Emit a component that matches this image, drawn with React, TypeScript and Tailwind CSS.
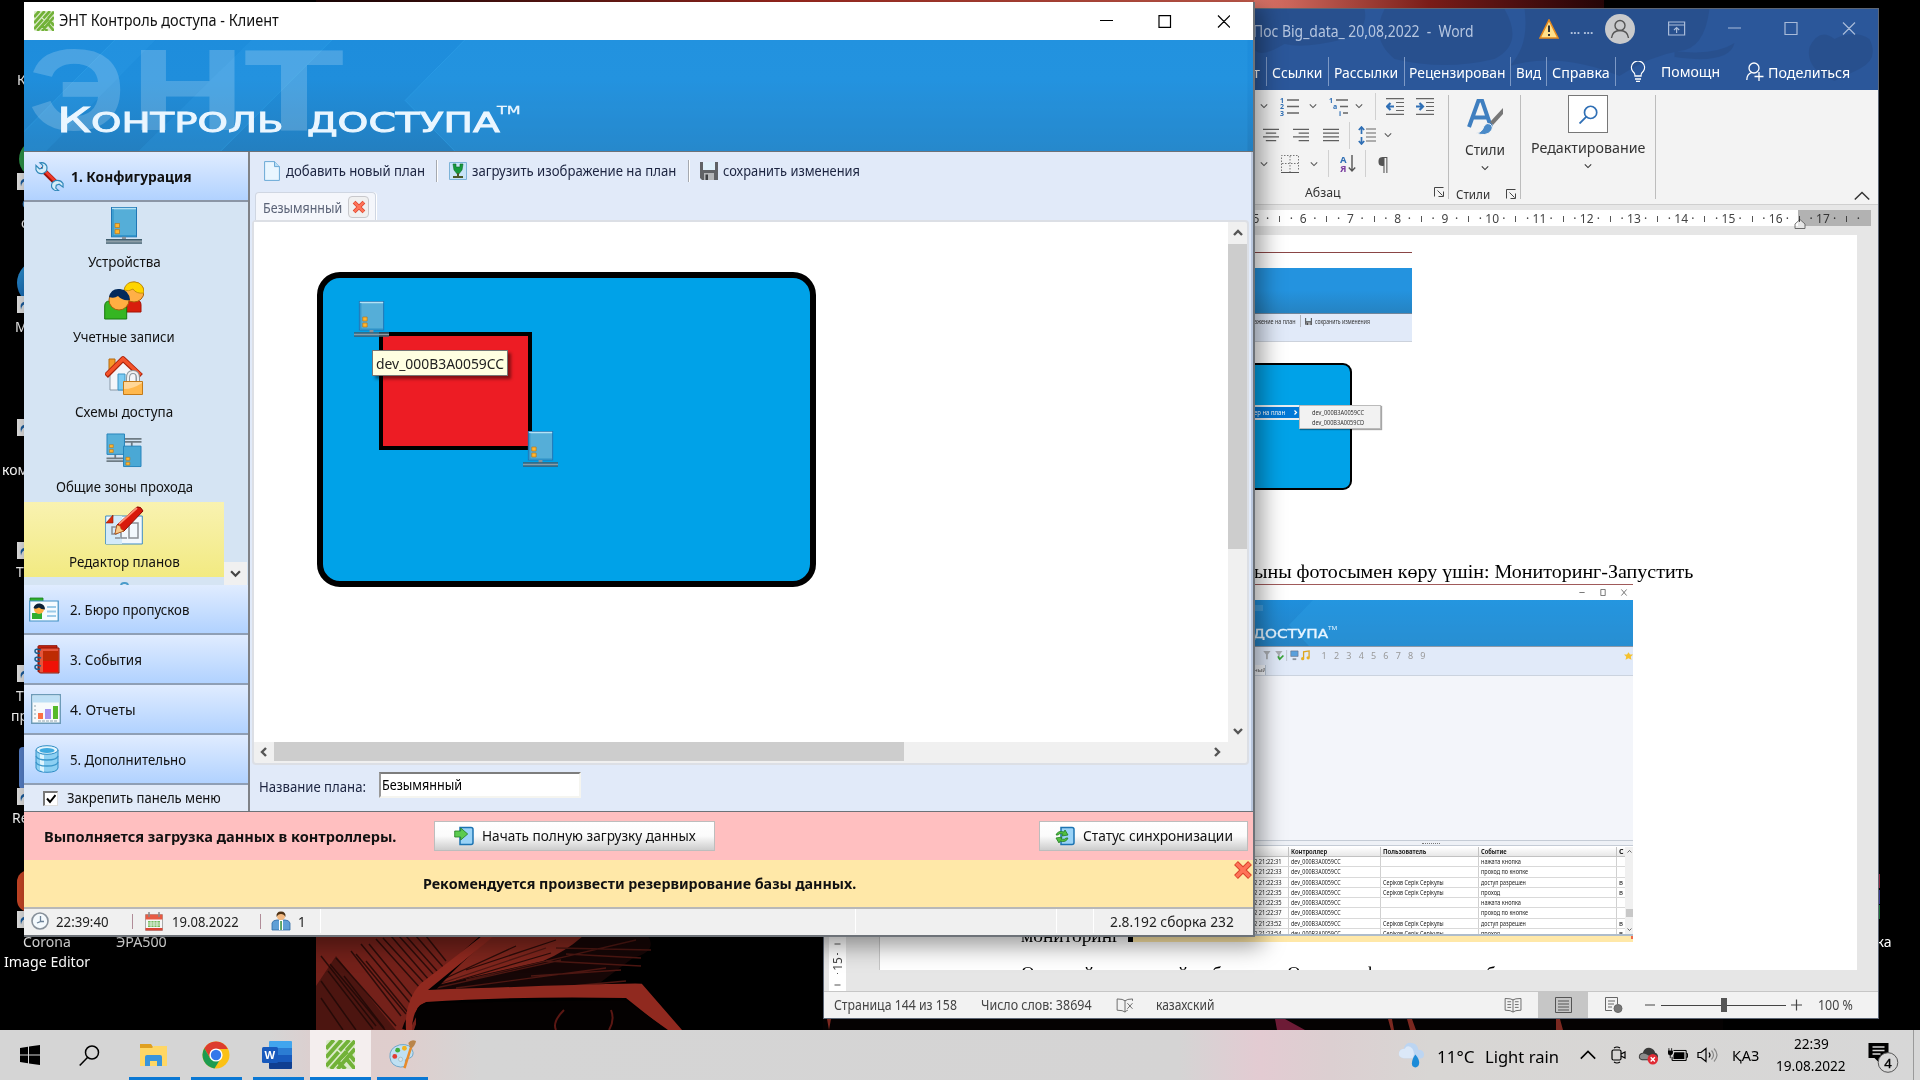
import React, { useLayoutEffect, useRef, useState } from "react";

/* Single-line label squeezed or stretched to an exact advance width. */
function Fit({ w, className = "", children }: { w: number; className?: string; children: React.ReactNode }) {
  const ref = useRef<HTMLSpanElement>(null);
  const [scale, setScale] = useState(1);
  useLayoutEffect(() => {
    const el = ref.current;
    if (el && el.offsetWidth) setScale(w / el.offsetWidth);
  }, [w]);
  return (
    <span className={"inline-block shrink-0 whitespace-pre " + className} style={{ width: w }}>
      <span ref={ref} className="inline-block origin-left" style={{ transform: `scaleX(${scale})` }}>
        {children}
      </span>
    </span>
  );
}

const UI = "font-['Noto_Sans','Open_Sans',sans-serif]";
const SERIF = "font-['Liberation_Serif',serif]";

function GreenLogo({ className = "" }: { className?: string }) {
  return (
    <svg viewBox="0 0 30 30" className={className} preserveAspectRatio="none">
      <rect width="30" height="30" rx="2" fill="#dcebcb" />
      <g stroke="#72b238" strokeWidth="4" fill="none">
        <path d="M0 9 8 0M0 18 16 0M0 27 13 12.500M14 11 24 0M5 30 21 12M12 30 30 9M21 11 30 1M13 21 22 12M20 18l10 12M12 22l8 8M25 16l5 6" />
      </g>
    </svg>
  );
}

function Device({ className = "" }: { className?: string }) {
  return (
    <svg viewBox="0 0 36 36" className={className} preserveAspectRatio="none">
      <rect x="5.500" y=".5" width="25" height="28.500" fill="#55aed8" stroke="#1f76b5" />
      <path d="M6 1.500h24" stroke="#b4e2f5" strokeWidth="1.500" />
      <path d="M7 2v26h23" stroke="#2990c8" fill="none" />
      <path d="M9 16h4.500v4H9zM9 22h4.500v4H9z" fill="#ffb52e" stroke="#b87616" strokeWidth=".7" />
      <path d="M16 29h4v3h-4z" fill="#8b9299" />
      <path d="M0 32h36M0 35h36" stroke="#3f5c6c" strokeWidth="1.500" />
      <path d="M0 33.500h36" stroke="#8c9da6" strokeWidth="1.500" />
    </svg>
  );
}

function Users() {
  return (
    <svg viewBox="0 0 40 39" className="h-[39px] w-[40px]">
      <path d="M21 31v-7q0-5 6-5h5q5 0 5 5v7z" fill="#d81e0c" stroke="#a51205" />
      <circle cx="30" cy="11" r="10" fill="#ffb047" stroke="#a8620c" />
      <path d="M20 9Q22 0 31 1q9 1 9 11-8 1-11-4-4 3-9 1z" fill="#ffd500" stroke="#b8860b" strokeWidth=".8" />
      <path d="M.7 38V25q0-5 5-5h12q5 0 5 5v13z" fill="#35b522" stroke="#19780e" />
      <circle cx="15" cy="19" r="10" fill="#ffae42" stroke="#a8620c" />
      <path d="M5 16Q7 7 16 8q9 1 10 11-8 1-12-4-4 3-9 1z" fill="#032a5c" />
    </svg>
  );
}

function House() {
  return (
    <svg viewBox="0 0 38 39" className="h-[39px] w-[38px]">
      <path d="M4 3h6v12H4z" fill="#f59a28" stroke="#b36a10" />
      <path d="M5 18 18 5l13 13v16H5z" fill="#f3f6fa" stroke="#8998a6" />
      <path d="M13 18h7v16h-7z" fill="#7ccbf2" stroke="#3a94c4" />
      <path d="M1 20 18 3l18 17" stroke="#a9230b" strokeWidth="5.500" fill="none" strokeLinejoin="round" />
      <path d="M1.500 19 18 3l17.500 16" stroke="#f4532a" strokeWidth="3.500" fill="none" />
      <path d="M23 26v-4q0-6 5-6t5 6v4" stroke="#8e979d" strokeWidth="4" fill="none" />
      <path d="M23 26v-4q0-6 5-6t5 6v4" stroke="#eef1f3" strokeWidth="2" fill="none" />
      <path d="M18.500 25.500h19v13h-19z" fill="#ffb84d" stroke="#c47a17" />
      <path d="M19 33q9 0 18-6v-1H19z" fill="#ffd798" />
    </svg>
  );
}

function Zones() {
  return (
    <svg viewBox="0 0 36 36" className="h-[35px] w-[36px]">
      <path d="M18 6h18M18 9h18M26 9v5M0 26h18M0 29h18M9 22v5" stroke="#6e7b84" strokeWidth="1.800" />
      <path d="M.5 1h18v21H.5z" fill="#58b0d9" stroke="#2583bb" />
      <path d="M17.500 13.500h18v21h-18z" fill="#4aa8d5" stroke="#2583bb" />
      <path d="M3 12h4v3H3zM3 17h4v3H3zM20 25h4v3h-4zM20 30h4v3h-4z" fill="#ffb52e" stroke="#b87616" strokeWidth=".6" />
    </svg>
  );
}

function PlanEdit() {
  return (
    <svg viewBox="0 0 39 39" className="h-[39px] w-[39px]">
      <path d="M.7 10h36.600v28H.7z" fill="#f2f8fd" stroke="#3c8bc4" />
      <path d="M1 38V18l8-8h8v28z" fill="#d3eafa" />
      <path d="M1 17 8 9v8z" fill="#d92b0b" stroke="#8e1a04" strokeWidth=".6" />
      <path d="M12 21H7v7h5M15 32h-5M16 27v5h6M24 17v15h9V17z" stroke="#8a8f95" fill="none" strokeWidth="1.500" />
      <path d="m10 28 2-9L32 1q4-1 6 4L19 25z" fill="#d8190b" stroke="#8a0c04" />
      <path d="m14 18 18-16" stroke="#ff8c70" strokeWidth="1.800" />
      <path d="m10 28 2-9 3 1 1 3 3 2z" fill="#f7c98a" stroke="#a8620c" strokeWidth=".5" />
    </svg>
  );
}

function Wrench() {
  return (
    <svg viewBox="0 0 30 30" className="h-[29px] w-[29px]">
      <path d="m6 6 17 17" stroke="#9c1108" strokeWidth="5.500" />
      <path d="m8 7 14 14" stroke="#ef3a2b" strokeWidth="3" />
      <path d="M1 3.500 4.500 7l3-.5L8 3.500 5 .8q5-1 7 3 1 3-.5 6l-3 2Q3 13 1 8zM29 26l-4-3-3 1-.5 3 3 2.700q-5 .5-7-3-1-3 .5-5.500l3-2q5.500-1.200 8 3z" fill="#d4edf9" stroke="#2e86b8" strokeWidth="1.200" />
    </svg>
  );
}

function Card() {
  return (
    <svg viewBox="0 0 30 25" className="h-[25px] w-[30px]">
      <path d="M1 1h13v4H1z" fill="#2fae30" stroke="#1b7d1c" strokeWidth=".8" />
      <path d="M.7 4h28.500v20H.7z" fill="#f5fbff" stroke="#4392c6" strokeWidth="1.200" />
      <path d="M18 10h9M18 14.500h9M18 19h9" stroke="#9bcbe8" strokeWidth="2" />
      <path d="M3 22v-6h10v6z" fill="#2fae30" />
      <circle cx="10" cy="12" r="5" fill="#ffae42" />
      <path d="M4.500 11Q6 6 11 6.500q5 1 5 6-4 0-6-2-3 2-5.500.5z" fill="#0c2238" />
    </svg>
  );
}

function Book() {
  return (
    <svg viewBox="0 0 26 29" className="h-[29px] w-[26px]">
      <path d="M4 1.500Q4 .7 5 .7h18v26H4z" fill="#c8250f" stroke="#8d1206" />
      <path d="M7 3h18v25H7q-2 0-2-1V4z" fill="#e5553b" stroke="#8d1206" />
      <path d="M9 6h15v21H9z" fill="#ef1106" />
      <path d="M9 6h15v10H9z" fill="#bd2b04" />
      <path d="M7 5Q1 3 1 6t5 2M7 13q-6-2-6 1t5 2M7 21q-6-2-6 1t5 2" fill="none" stroke="#1d5f8e" strokeWidth="1.600" />
    </svg>
  );
}

function Report() {
  return (
    <svg viewBox="0 0 30 30" className="h-[30px] w-[30px]">
      <path d="M.7.700h28.600v28.600H.7z" fill="#f7fafb" stroke="#6d9bb8" strokeWidth="1.400" />
      <path d="M1.500 1.500h27v7h-27z" fill="#bfe0f5" />
      <path d="M3 12h2M3 16h2M3 20h2M3 24h2M7 27h20" stroke="#8fa3ae" strokeDasharray="3 1" />
      <path d="M7 19h5v6H7z" fill="#fb6f46" />
      <path d="M14 15h6v10h-6z" fill="#a18ff0" />
      <path d="M22 12h5v13h-5z" fill="#55b92b" />
    </svg>
  );
}

function Database() {
  return (
    <svg viewBox="0 0 24 28" className="h-[28px] w-[24px]">
      <path d="M1 5v18q1 4.300 11 4.300T23 23V5z" fill="#8dd0f3" stroke="#2f8dc4" />
      <path d="M5 9v16l4 2V10z" fill="#dff4fd" />
      <ellipse cx="12" cy="5" rx="11" ry="4.300" fill="#e3f5fd" stroke="#2f8dc4" />
      <ellipse cx="12" cy="5.500" rx="7.500" ry="2.600" fill="#3ea9df" />
      <path d="M1 11q1 4 11 4t11-4M1 17q1 4 11 4t11-4" fill="none" stroke="#3b97cb" strokeWidth="1.300" />
    </svg>
  );
}

function RedCross({ className = "" }: { className?: string }) {
  return (
    <svg viewBox="0 0 20 20" className={className}>
      <path d="M3 3l14 14M17 3 3 17" stroke="#d8412a" strokeWidth="5.500" />
      <path d="M3.500 3.500l13 13M16.500 3.500l-13 13" stroke="#ff7358" strokeWidth="3.600" />
    </svg>
  );
}

function LoadIcon({ sync = false }: { sync?: boolean }) {
  return (
    <svg viewBox="0 0 20 20" className="h-[20px] w-[20px]">
      <path d="M6 1.500h11q2 0 2 2v13q0 2-2 2H6z" fill="#9ad3f7" stroke="#1c74b3" strokeWidth="1.500" />
      {sync ? (
        <path d="M1 9Q3 4 9 6l1-2 3 5-6 1 1-2Q4 7 3 9zM13 12q-2 5-8 3l-1 2-3-5 6-1-1 2q4 1 5-1z" fill="#52c03f" stroke="#217c22" strokeWidth=".8" />
      ) : (
        <path d="M.7 5h6V2l7 6-7 6v-3h-6z" fill="#5bcb4e" stroke="#217c22" strokeWidth=".8" />
      )}
    </svg>
  );
}

function Chev({ dir = "down", className = "" }: { dir?: "down" | "up" | "left" | "right"; className?: string }) {
  const d = { down: "M1 3l4 4 4-4", up: "M1 7l4-4 4 4", left: "M7 1 3 5l4 4", right: "M3 1l4 4-4 4" }[dir];
  return (
    <svg viewBox="0 0 10 10" className={"shrink-0 " + className}>
      <path d={d} fill="none" stroke="currentColor" strokeWidth="var(--sw,1.3)" />
    </svg>
  );
}

function Floppy({ className = "" }: { className?: string }) {
  return (
    <svg viewBox="0 0 18 18" className={className} preserveAspectRatio="none">
      <path d="M0 0h18v18H2l-2-2z" fill="#606266" />
      <path d="M3 0h12v8H3z" fill="#dff0fb" />
      <path d="M4 11h10v7H4z" fill="#b3b5b8" />
      <path d="M5.500 12.500H8V18H5.500z" fill="#3c3e42" />
    </svg>
  );
}

const sideItems = [
  { label: "Устройства", w: 73, icon: <Device className="h-[37px] w-[36px]" />, sel: false },
  { label: "Учетные записи", w: 102, icon: <Users />, sel: false },
  { label: "Схемы доступа", w: 98, icon: <House />, sel: false },
  { label: "Общие зоны прохода", w: 137, icon: <Zones />, sel: false },
  { label: "Редактор планов", w: 111, icon: <PlanEdit />, sel: true },
];

const sections = [
  { label: "2. Бюро пропусков", w: 119, icon: <Card />, pad: "pl-[5px] pr-[11px]" },
  { label: "3. События", w: 72, icon: <Book />, pad: "pl-[10px] pr-[10px]" },
  { label: "4. Отчеты", w: 66, icon: <Report />, pad: "pl-[7px] pr-[9px]" },
  { label: "5. Дополнительно", w: 116, icon: <Database />, pad: "pl-[11px] pr-[11px]" },
];

function Sidebar() {
  return (
    <div className="flex w-[226px] flex-col border-r-2 border-[#7f8287] bg-[#d5e4f3]">
      <div className="flex h-[50px] shrink-0 items-center border-b-2 border-[#8b96a6] bg-gradient-to-b from-[#e0ecff] to-[#b1d2ff] pl-[11px]">
        <Wrench />
        <Fit w={121} className="ml-[7px] text-[14px] font-bold">1. Конфигурация</Fit>
      </div>
      <div className="flex h-[383px] shrink-0 overflow-hidden">
        <div className="w-[200px]">
          {sideItems.map((s) => (
            <div key={s.label} className={"flex h-[75px] flex-col items-center " + (s.sel ? "bg-gradient-to-b from-[#f9f2b0] to-[#f2ea81]" : "")}>
              <div className="mt-[2px] flex h-[42px] items-center">{s.icon}</div>
              <Fit w={s.w} className="mt-[6px] text-[14px] leading-[20px]">{s.label}</Fit>
            </div>
          ))}
          <div className="mx-auto mt-[5px] h-[8px] w-[9px] rounded-full border-2 border-[#4b9ccb]" />
        </div>
        <div className="mt-auto flex h-[23px] w-[23px] items-center justify-center bg-[#f0f0f0] text-[#444]">
          <Chev className="size-[11px] [--sw:2]" />
        </div>
      </div>
      {sections.map((s) => (
        <div key={s.label} className="flex h-[50px] shrink-0 items-center border-b-2 border-[#8f9fb5] bg-gradient-to-b from-[#e0ecff] to-[#b1d2ff]">
          <div className={"box-border w-[46px] shrink-0 " + s.pad}>
            <div className="w-[30px]">{s.icon}</div>
          </div>
          <Fit w={s.w} className="text-[14px]">{s.label}</Fit>
        </div>
      ))}
      <div className="flex flex-1 items-center bg-[#e1eaf8] pl-[19px]">
        <div className="flex size-[15px] items-center justify-center border border-t-2 border-l-2 border-[#ddd] border-t-[#777] border-l-[#777] bg-white">
          <svg viewBox="0 0 10 10" className="size-[10px]"><path d="M1 4.500 4 8l5.500-7" stroke="#000" strokeWidth="2" fill="none" /></svg>
        </div>
        <Fit w={154} className="ml-[9px] mt-[-2px] text-[14px]">Закрепить панель меню</Fit>
      </div>
    </div>
  );
}

function PlanCanvas() {
  return (
    <div className="relative flex-1 bg-white">
      <div className="absolute left-[63px] top-[50px] h-[315px] w-[499px] rounded-[23px] border-[6px] border-black bg-[#00a2e8]" />
      <div className="absolute left-[125px] top-[110px] h-[118px] w-[153px] border-4 border-black bg-[#ed1c24]" />
      <Device className="absolute left-[100px] top-[79px] h-[36px] w-[35px]" />
      <Device className="absolute left-[269px] top-[209px] h-[36px] w-[35px]" />
      <div className="absolute left-[118px] top-[128px] flex h-[26px] w-[136px] items-center border border-[#767676] bg-[#ffffe1] pl-[3px] text-[#222] shadow-[3px_3px_3px_rgba(0,0,0,0.45)]">
        <Fit w={128} className="text-[14px]">dev_000B3A0059CC</Fit>
      </div>
    </div>
  );
}

function ClientWindow() {
  return (
    <div className={"absolute left-[24px] top-[2px] flex h-[935px] w-[1231px] flex-col border-r-2 border-b-2 border-[#6d7278] bg-[#f0f0f0] text-[#111] shadow-[4px_6px_22px_3px_rgba(0,0,0,0.4)] " + UI}>
      <div className="flex h-[38px] shrink-0 items-center bg-white pl-[10px]">
        <GreenLogo className="h-[20px] w-[20px]" />
        <Fit w={220} className="ml-[5px] text-[15.500px]">ЭНТ Контроль доступа - Клиент</Fit>
        <svg viewBox="0 0 130 13" className="ml-[821px] h-[13px] w-[130px]" fill="none" stroke="#000" strokeWidth="1.200">
          <path d="M0 5.500h13M59 .6h11.500v11.800H59zM118 .5l12 12M130 .5l-12 12" />
        </svg>
      </div>
      <div className="relative h-[111px] shrink-0 overflow-hidden bg-gradient-to-b from-[#1e8ddc] via-[#1f8edc] via-35% to-[#237fc0] text-white">
        <svg viewBox="0 0 1229 112" className="absolute inset-0 h-full w-full">
          <path d="M86 0h41L17 112H-25zM224 0h81L193 112h-83z" fill="#35a9ee" opacity=".18" />
          <path d="M439 0 379 61l50 51h800V0z" fill="#2da0e8" opacity=".3" />
          <path d="M439 0 379 61l50 51M305 0 193 112M86 0-25 112" fill="none" stroke="#36a7ec" strokeWidth=".7" opacity=".6" />
        </svg>
        <div className="absolute left-[6px] top-[-13px] flex font-['Liberation_Sans',sans-serif] text-[113px] font-bold leading-[126px] opacity-[0.19] [-webkit-text-stroke:2px_#fff]">
          <Fit w={94}>Э</Fit>
          <Fit w={112} className="ml-[8px]">Н</Fit>
          <Fit w={98} className="ml-px">Т</Fit>
        </div>
        <div className="absolute left-[33px] top-[60px] flex items-baseline font-['DejaVu_Sans',sans-serif] text-[27px] leading-[40px] text-[#eaf6ff] [-webkit-text-stroke:0.9px_#eaf6ff]">
          <Fit w={34} className="text-[34px]">К</Fit>
          <Fit w={192}>ОНТРОЛЬ</Fit>
          <Fit w={193} className="ml-[24px]">ДОСТУПА</Fit>
          <Fit w={24} className="ml-[-3px] self-start text-[10px] leading-[22px] [-webkit-text-stroke:0.3px_#eaf6ff]">ТМ</Fit>
        </div>
      </div>
      <div className="flex h-[661px] shrink-0 border-y border-[#6d7278]">
        <Sidebar />
        <div className="flex flex-1 flex-col border-r-2 border-[#b9c6dc] bg-[#e1eaf9]">
          <div className="flex h-[38px] shrink-0 items-center pl-[14px] text-[14px] text-[#1c2440]">
            <svg viewBox="0 0 16 20" className="h-[20px] w-[16px]"><path d="M.6.600h10l4.800 5v13.800H.6z" fill="#e9f6ff" stroke="#6aa9d6" /><path d="M10.500.6v5h5" fill="#b7ddf5" stroke="#6aa9d6" /></svg>
            <Fit w={139} className="ml-[6px] mt-[-1px]">добавить новый план</Fit>
            <span className="ml-[11px] h-[22px] w-[2px] border-l border-[#a5a9b0] bg-white" />
            <svg viewBox="0 0 18 18" className="ml-[11px] h-[18px] w-[18px]"><path d="M.5.500h17v17H.5z" fill="#c8e4f8" stroke="#7db3d8" /><path d="M4 2h3v3h4V2h3l-1 6-4 5-4-5z" fill="#159a3c" stroke="#0b6a27" strokeWidth=".6" /><path d="M8 11h2v3h4v2H4v-2h4z" fill="#4a5a2a" /></svg>
            <Fit w={204} className="ml-[5px] mt-[-1px]">загрузить изображение на план</Fit>
            <span className="ml-[12px] h-[22px] w-[2px] border-l border-[#a5a9b0] bg-white" />
            <Floppy className="ml-[10px] h-[18px] w-[18px]" />
            <Fit w={137} className="ml-[5px] mt-[-1px]">сохранить изменения</Fit>
          </div>
          <div className="ml-[5px] mt-[2px] flex h-[28px] w-[121px] shrink-0 items-center rounded-t border border-b-0 border-[#cfd6e2] bg-[#f4f6fb] pl-[7px] shadow-[1px_0_0_#fff]">
            <Fit w={79} className="mt-px text-[14px] text-[#5b6377]">Безымянный</Fit>
            <span className="ml-[6px] flex h-[22px] w-[21px] items-center justify-center rounded border border-[#c8c8cc] bg-[#f0f0f0]"><RedCross className="size-[14px]" /></span>
          </div>
          <div className="ml-[2px] mr-[2px] flex h-[545px] shrink-0 flex-col rounded border-2 border-[#dcdfe5] bg-[#f0f0f0]">
            <div className="flex flex-1">
              <PlanCanvas />
              <div className="flex w-[19px] flex-col items-center text-[#555]">
                <Chev dir="up" className="my-[6px] size-[10px] [--sw:2.4]" />
                <div className="h-[305px] w-[19px] bg-[#cdcdcd]" />
                <Chev className="mb-[6px] mt-auto size-[10px] [--sw:2.4]" />
              </div>
            </div>
            <div className="flex h-[21px] items-start text-[#555]">
              <Chev dir="left" className="mx-[5px] mt-[5px] size-[10px] [--sw:2.4]" />
              <div className="h-[19px] w-[630px] bg-[#cdcdcd]" />
              <Chev dir="right" className="ml-auto mr-[25px] mt-[5px] size-[10px] [--sw:2.4]" />
            </div>
          </div>
          <div className="flex flex-1 items-center pb-[4px] pl-[9px] text-[14px] text-[#1c2440]">
            <Fit w={107}>Название плана:</Fit>
            <div className="ml-[13px] mt-[-2px] flex h-[26px] w-[202px] items-center border-2 border-[#f5f5f0] border-l-[#999] border-t-[#7d7d7d] bg-white text-black">
              <Fit w={80} className="ml-px mt-[-2px]">Безымянный</Fit>
            </div>
          </div>
        </div>
      </div>
      <div className="flex h-[48px] shrink-0 items-center bg-[#ffbfc0] text-[14px]">
        <Fit w={352} className="ml-[20px] font-bold">Выполняется загрузка данных в контроллеры.</Fit>
        <div className="ml-[38px] flex h-[30px] w-[281px] items-center border border-[#bdbdbd] bg-gradient-to-b from-white via-[#fbfbfb] via-50% to-[#cdcdcd] pl-[19px]">
          <LoadIcon /><Fit w={214} className="ml-[8px] mt-[-1px]">Начать полную загрузку данных</Fit>
        </div>
        <div className="ml-[324px] flex h-[30px] w-[209px] items-center border border-[#bdbdbd] bg-gradient-to-b from-white via-[#fbfbfb] via-50% to-[#cdcdcd] pl-[15px]">
          <LoadIcon sync /><Fit w={150} className="ml-[8px] mt-[-1px]">Статус синхронизации</Fit>
        </div>
      </div>
      <div className="flex h-[47px] shrink-0 items-center bg-[#ffe8a8] text-[14px]">
        <Fit w={433} className="ml-[399px] font-bold">Рекомендуется произвести резервирование базы данных.</Fit>
        <RedCross className="ml-auto size-[20px] self-start" />
      </div>
      <div className="flex flex-1 items-center border-t-2 border-[#b8b8b8] pb-[5px] text-[15px] text-[#222]">
        <svg viewBox="0 0 18 18" className="ml-[7px] size-[18px]"><circle cx="9" cy="9" r="8" fill="#f4f9fd" stroke="#87909a" strokeWidth="1.600" /><path d="M9.500 4v5.500L6 11M9 9.500h4" stroke="#6b8197" fill="none" strokeWidth="1.300" /></svg>
        <Fit w={53} className="ml-[7px]">22:39:40</Fit>
        <span className="ml-[23px] h-[15px] w-px bg-[#b08c98]" />
        <svg viewBox="0 0 18 19" className="ml-[12px] h-[19px] w-[18px]"><path d="M.5 2.500h17v16H.5z" fill="#f7f7f7" stroke="#aaa" /><path d="M.5 2.500h17v5H.5z" fill="#e75a43" /><path d="M.5 16h17v2.500H.5z" fill="#d84534" /><path d="M4 0v5M14 0v5" stroke="#888" strokeWidth="1.500" /><path d="M3 9h12v6H3z" fill="#75bb61" /><path d="M3 11h12M3 13h12M6 9v6M9 9v6M12 9v6" stroke="#fff" strokeWidth=".7" /></svg>
        <Fit w={67} className="ml-[9px]">19.08.2022</Fit>
        <span className="ml-[21px] h-[15px] w-px bg-[#b08c98]" />
        <svg viewBox="0 0 20 20" className="ml-[10px] size-[20px]"><path d="M1 19v-7q1-3 5-3h8q4 0 5 3v7z" fill="#5f9fd6" stroke="#2f6aa3" strokeWidth=".8" /><path d="M8 9h4v10H8z" fill="#fff" /><path d="M9.300 10h1.500v9H9.300z" fill="#2f8d3b" /><circle cx="10" cy="5" r="4" fill="#f3b982" /><path d="M5.500 6Q5 .5 10 .5t4.500 5.500Q13 3 10 3T5.500 6z" fill="#4e3215" /></svg>
        <Fit w={8} className="ml-[7px]">1</Fit>
        <span className="ml-[14px] h-[24px] w-px bg-white" />
        <span className="ml-[534px] h-[24px] w-px bg-white" />
        <span className="ml-[200px] h-[24px] w-px bg-white" />
        <span className="ml-[36px] h-[24px] w-px bg-white" />
        <Fit w={124} className="ml-[16px]">2.8.192 сборка 232</Fit>
      </div>
    </div>
  );
}

function Sep({ className = "" }: { className?: string }) {
  return <span className={"w-px shrink-0 bg-[#7d99c6] " + className} />;
}

function Lines({ kind }: { kind: "center" | "right" | "full" }) {
  const d = {
    center: "M0 1h17M3 5h11M0 9h17M3 13h11",
    right: "M0 1h17M6 5h11M0 9h17M6 13h11",
    full: "M0 1h17M0 5h17M0 9h17M0 13h17",
  }[kind];
  return <svg viewBox="0 0 17 14" className="h-[14px] w-[16px] shrink-0"><path d={d} stroke="#5f5f5f" strokeWidth="1.200" /></svg>;
}

function Launcher({ className = "" }: { className?: string }) {
  return <svg viewBox="0 0 10 10" className={"size-[10px] shrink-0 " + className}><path d="M.5 9.500v-9h9M3.500 3.500l5 5M9.500 4.500v5h-5" fill="none" stroke="#444" /></svg>;
}

function Indent({ right = false }: { right?: boolean }) {
  return (
    <svg viewBox="0 0 18 17" className="h-[17px] w-[18px] shrink-0">
      <path d="M0 .6h18M10 4.500h8M10 8.500h8M10 12.500h8M0 16.400h18" stroke="#666" strokeWidth="1.200" />
      <path d={right ? "M0 8.500h6M3.500 5 7 8.500 3.500 12" : "M8 8.500H2M4.500 5 1 8.500 4.500 12"} stroke="#2f6fb5" strokeWidth="2.200" fill="none" />
    </svg>
  );
}

function ListMarker({ x, y, children }: { x: number; y: number; children: string }) {
  return <text x={x} y={y} fontSize="7" fill="#2f6fb5" fontFamily="Noto Sans" fontWeight="bold">{children}</text>;
}

function Ribbon() {
  return (
    <div className="flex h-[115px] shrink-0 border-b border-[#cfcfcf] bg-[#f3f3f3] pl-[434px] text-[#333]">
      <div className="flex w-[190px] flex-col">
        <div className="mt-[2px] flex h-[29px] items-center text-[#555]">
          <Chev className="ml-[2px] size-[8px]" />
          <svg viewBox="0 0 19 21" className="ml-[12px] h-[21px] w-[19px]"><path d="M7 4h12M7 10.500h12M7 17h12" stroke="#666" strokeWidth="1.300" /><ListMarker x={0} y={6.500}>1</ListMarker><ListMarker x={0} y={13.200}>2</ListMarker><ListMarker x={0} y={20}>3</ListMarker></svg>
          <Chev className="ml-[10px] size-[8px]" />
          <svg viewBox="0 0 19 21" className="ml-[12px] h-[21px] w-[19px]"><path d="M7 4h12M11 10.500h8M14 17h5" stroke="#666" strokeWidth="1.300" /><ListMarker x={0} y={6.500}>1</ListMarker><ListMarker x={4} y={13.200}>a</ListMarker><ListMarker x={10} y={20}>i</ListMarker></svg>
          <Chev className="ml-[7px] size-[8px]" />
          <span className="ml-[12px] h-[27px] w-px bg-[#d0d0d0]" />
          <span className="ml-[10px] flex gap-[12px]"><Indent /><Indent right /></span>
        </div>
        <div className="flex h-[29px] items-center">
          <span className="ml-[5px] flex gap-[14px]"><Lines kind="center" /><Lines kind="right" /><Lines kind="full" /></span>
          <span className="ml-[10px] h-[27px] w-px bg-[#d0d0d0]" />
          <svg viewBox="0 0 18 19" className="ml-[8px] h-[19px] w-[18px]"><path d="M8 3h10M8 7h10M8 11h10M8 15h10" stroke="#666" strokeWidth="1.200" /><path d="M3.500 1v7M3.500 11v7M.8 4l2.700-3 2.700 3M.8 15l2.700 3 2.700-3" stroke="#2f6fb5" strokeWidth="1.700" fill="none" /></svg>
          <Chev className="ml-[8px] size-[8px] text-[#555]" />
        </div>
        <div className="flex h-[29px] items-center text-[#555]">
          <Chev className="ml-[2px] size-[8px]" />
          <svg viewBox="0 0 18 18" className="ml-[13px] size-[18px]"><path d="M.5 16V.500h17V16M9 1v16M1 8.500h16" stroke="#777" strokeDasharray="1.500 1.500" fill="none" /><path d="M0 17.500h18" stroke="#555" /></svg>
          <Chev className="ml-[11px] size-[8px]" />
          <span className="ml-[10px] h-[27px] w-px bg-[#d0d0d0]" />
          <span className="ml-[11px] flex flex-col text-[9.500px] font-bold leading-[9px]"><span className="text-[#2f6fb5]">А</span><span className="text-[#7b3fa0]">Я</span></span>
          <svg viewBox="0 0 8 18" className="ml-px h-[18px] w-[8px]"><path d="M4 0v16M.8 12.500 4 16l3.200-3.500" stroke="#555" strokeWidth="1.400" fill="none" /></svg>
          <span className="ml-[9px] h-[27px] w-px bg-[#d0d0d0]" />
          <span className="ml-[12px] text-[18px] leading-[20px]">¶</span>
        </div>
        <div className="flex h-[26px] items-center pt-[2px] text-[13px] leading-[18px]">
          <Fit w={36} className="ml-[47px]">Абзац</Fit>
          <Launcher className="ml-auto mr-[4px]" />
        </div>
      </div>
      <span className="mt-[5px] h-[104px] w-px bg-[#bdbdbd]" />
      <div className="flex w-[71px] flex-col items-center">
        <svg viewBox="0 0 36 36" className="mt-[9px] h-[36px] w-[36px]"><path d="M2 28 11.500 1.500H15L24 28M6 18.500h14" stroke="#3f7fc0" strokeWidth="4" fill="none" /><path d="M36 9v6L26 26l-3-3z" fill="#777" /><path d="M9 34q6 0 8-7 3-4 6-2 4 3 1 7-5 6-15 2z" fill="#4a8ac8" stroke="#f3f3f3" /></svg>
        <Fit w={40} className="mt-[3px] text-[15px] leading-[22px]">Стили</Fit>
        <Chev className="mt-[4px] size-[8px]" />
        <div className="ml-[-1px] mt-auto flex h-[20px] items-center self-stretch pl-[8px] text-[13px] leading-[18px]">
          <Fit w={34}>Стили</Fit><Launcher className="ml-auto mr-[4px]" />
        </div>
      </div>
      <span className="mt-[5px] h-[104px] w-px bg-[#bdbdbd]" />
      <div className="flex w-[134px] flex-col items-center">
        <div className="mt-[5px] flex h-[38px] w-[40px] items-center justify-center border border-[#777] bg-white">
          <svg viewBox="0 0 18 18" className="size-[19px]"><circle cx="11" cy="7" r="5.800" fill="none" stroke="#2f6fb5" strokeWidth="1.600" /><path d="m7 11-6.500 6.500" stroke="#2f6fb5" strokeWidth="1.800" /></svg>
        </div>
        <Fit w={114} className="mt-[3px] text-[15px] leading-[22px]">Редактирование</Fit>
        <Chev className="mt-[4px] size-[8px]" />
      </div>
      <span className="mt-[5px] h-[104px] w-px bg-[#bdbdbd]" />
      <Chev dir="up" className="mb-[-1px] ml-auto mr-[7px] size-[18px] self-end [--sw:0.8]" />
    </div>
  );
}

const rulerTicks = [5, 6, 7, 8, 9, 10, 11, 12, 13, 14, 15, 16, 17];

const logRows = [
  ["2 21:22:31", "", "нажата кнопка", 40],
  ["2 21:22:33", "", "проход по кнопке", 47],
  ["2 21:22:33", "Серіков Серік Серікулы", "доступ разрешен", 45],
  ["2 21:22:35", "Серіков Серік Серікулы", "проход", 19],
  ["2 21:22:35", "", "нажата кнопка", 40],
  ["2 21:22:37", "", "проход по кнопке", 47],
  ["2 21:23:52", "Серіков Серік Серікулы", "доступ разрешен", 45],
  ["2 21:23:54", "Серіков Серік Серікулы", "проход", 19],
] as const;

function MonitoringShot() {
  return (
    <div className={"flex h-[358px] w-[500px] shrink-0 flex-col overflow-hidden border-t border-[#a05a5a] bg-white " + UI}>
      <div className="flex h-[15px] shrink-0 items-center justify-end pr-[3px]">
        <svg viewBox="0 0 54 8" className="h-[7px] w-[54px]"><path d="M0 4h6M24.500.5h5v7h-5zM48 .5l6 7M54 .5l-6 7" stroke="#555" fill="none" strokeWidth=".9" /></svg>
      </div>
      <div className="relative flex h-[46px] shrink-0 items-start overflow-hidden bg-gradient-to-b from-[#1f8fdc] to-[#2583c4] pl-[120px] pt-[25px] text-[#e8f5ff]">
        <svg viewBox="0 0 500 46" className="absolute inset-0 h-full w-full"><path d="m180 0-24 25 20 21h324V0z" fill="#2d9fe6" opacity=".4" /><path d="M121 5h9v6h-9z" fill="#fff" opacity=".15" /></svg>
        <Fit w={75} className="relative font-['DejaVu_Sans',sans-serif] text-[12px] leading-[18px] [-webkit-text-stroke:0.3px_#e8f5ff]">ДОСТУПА</Fit>
        <Fit w={9} className="relative text-[5px] leading-[6px]">ТМ</Fit>
      </div>
      <div className="flex h-[18px] shrink-0 items-center border-t border-[#8d99a8] bg-[#e1eaf9] pl-[128px]">
        <svg viewBox="0 0 54 12" className="h-[11px] w-[54px]"><path d="M0 1h8L5 5v5H3V5zM13 1h8l-3 4v5h-2V5z" fill="#a9adb2" /><path d="m16 7 2 3 4-4" stroke="#35a435" strokeWidth="1.800" fill="none" /><path d="M25.500 0v12" stroke="#b0b6c0" strokeWidth=".8" /><path d="M30 1h8v6h-8z" fill="#5aa0dc" stroke="#667" strokeWidth=".6" /><path d="M32 9h4v2h-4z" fill="#8a929c" /><path d="M44 9V2l6-1v7" stroke="#dca51f" strokeWidth="1.400" fill="none" /><circle cx="43" cy="9.500" r="1.800" fill="#e8b022" /><circle cx="49" cy="8.500" r="1.800" fill="#e8b022" /></svg>
        <div className="ml-[3px] flex text-[9px] text-[#999]">
          {[1, 2, 3, 4, 5, 6, 7, 8, 9].map((n) => <span key={n} className="w-[12.350px] text-center">{n}</span>)}
        </div>
        <svg viewBox="0 0 12 10" className="ml-auto h-[10px] w-[9px]"><path d="m6 0 2 3h4L9 6l1 4-4-2-4 2 1-4-3-3h4z" fill="#f5c12e" /></svg>
      </div>
      <div className="flex h-[12px] shrink-0 items-end border-b border-[#cbd3df] bg-[#e1eaf9]">
        <span className="ml-[121px] h-[10px] w-[12px] overflow-hidden border-r border-[#b8c4d4] bg-[#f2f5fa] text-[6px] leading-[10px] text-[#555]">ный</span>
      </div>
      <div className="h-[164px] shrink-0 bg-[#f3f5fa]" />
      <div className="flex h-[6px] shrink-0 items-center border-y border-[#c5ccd6] bg-[#eef1f6]"><span className="ml-[289px] w-[18px] border-t border-dotted border-[#777]" /></div>
      <div className="flex h-[88px] shrink-0 overflow-hidden pt-[0.500px] text-[7px] text-[#222]">
        <div className="w-[492px] overflow-hidden">
          <div className="flex h-[10.500px] items-center border-b border-[#c2c2c2] bg-gradient-to-b from-white to-[#e8e8e8] font-bold leading-[9px]">
            <span className="h-full w-[156px] border-r border-[#c2c2c2]" />
            <span className="h-full w-[92px] border-r border-[#c2c2c2] pl-[2px]"><Fit w={36}>Контроллер</Fit></span>
            <span className="h-full w-[98px] border-r border-[#c2c2c2] pl-[2px]"><Fit w={43}>Пользователь</Fit></span>
            <span className="h-full w-[138px] border-r border-[#c2c2c2] pl-[2px]"><Fit w={26}>Событие</Fit></span>
            <span className="pl-[2px]">С</span>
          </div>
          {logRows.map(([t, user, ev, w], i) => (
            <div key={i} className="flex h-[10.250px] items-center border-b border-[#d9d9d9] leading-[9px]">
              <span className="h-full w-[156px] border-r border-[#d0d0d0] pl-[121px]"><Fit w={28}>{t}</Fit></span>
              <span className="h-full w-[92px] border-r border-[#d0d0d0] pl-[2px]"><Fit w={50}>dev_000B3A0059CC</Fit></span>
              <span className="h-full w-[98px] border-r border-[#d0d0d0] pl-[2px]">{user && <Fit w={61}>{user}</Fit>}</span>
              <span className="h-full w-[138px] border-r border-[#d0d0d0] pl-[2px]"><Fit w={w}>{ev}</Fit></span>
              <span className="pl-[2px]">{user && "в"}</span>
            </div>
          ))}
        </div>
        <div className="flex w-[8px] flex-col items-center bg-[#f0f0f0]">
          <Chev dir="up" className="mt-[2px] size-[5px]" />
          <span className="mt-auto h-[8px] w-[7px] bg-[#c8c8c8]" />
          <Chev className="mb-[2px] mt-[10px] size-[5px]" />
        </div>
      </div>
      <div className="flex flex-1 justify-end border-t-2 border-[#aebccb] bg-[#ffe8a8]"><span className="h-[3px] w-[2px] bg-[#f06a4a]" /></div>
    </div>
  );
}

function DocumentPage() {
  return (
    <div className={"ml-[32px] h-[735px] w-[978px] shrink-0 overflow-hidden border-l border-[#c6c6c6] bg-white text-black " + SERIF}>
      <div className={"ml-[374px] flex w-[200px] flex-col pt-[17px] " + UI}>
        <span className="h-px w-[158px] bg-[#8a4545]" />
        <div className="mt-[15px] h-[46px] w-[158px] border-b border-[#71869c] bg-gradient-to-b from-[#2493df] via-[#2493df] via-50% to-[#2583c2]" />
        <div className="flex h-[28px] w-[158px] border-b border-[#ccd2dc] bg-[#e1eaf9] pt-px text-[7.500px] leading-[12px] text-[#333]">
          <Fit w={42}>ажение на план</Fit>
          <span className="ml-[4px] h-[12px] w-px bg-[#b0b4bb]" />
          <Floppy className="ml-[4px] mt-[3px] h-[7px] w-[7px]" />
          <Fit w={55} className="ml-[3px]">сохранить изменения</Fit>
        </div>
        <div className="relative mt-[21px] h-[127px] w-[98px] rounded-r-[9px] border-[2.500px] border-l-0 border-black bg-[#00a2e8] pt-[40px] text-[7.500px] text-white">
          <div className="flex h-[15px] w-[46px] items-center border-y-2 border-[#e8eef3] bg-[#0078d7]">
            <Fit w={31}>ер на план</Fit>
            <Chev dir="right" className="ml-[8px] size-[5px] [--sw:2.5]" />
          </div>
          <div className="absolute left-[45px] top-[40px] flex h-[24px] w-[82px] flex-col justify-center border border-[#bbb] bg-[#f2f2f2] pl-[12px] leading-[10px] text-[#333] shadow-[1px_1px_1px_rgba(0,0,0,0.35)]">
            <Fit w={52}>dev_000B3A0059CC</Fit>
            <Fit w={52}>dev_000B3A0059CD</Fit>
          </div>
        </div>
      </div>
      <div className="ml-[374px] mt-[70px] h-[24px] text-[19px] leading-[24px]"><Fit w={439}>ыны фотосымен көру үшін: Мониторинг-Запустить</Fit></div>
      <div className="flex items-end">
        <div className="ml-[141px] flex h-[22px] w-[112px] items-end">
          <Fit w={99} className="mb-[-6px] text-[19px] leading-[24px]">мониторинг</Fit>
          <span className="ml-[8px] size-[5px] bg-black" />
        </div>
        <MonitoringShot />
      </div>
      <div className="mt-[20px] flex text-[19px] leading-[24px]">
        <span className="ml-[141px] w-[63px]">О</span><span className="w-[94px]">й</span><span className="w-[34px]">й</span>
        <span className="w-[75px]">б</span><span className="w-[77px]">О</span><span className="w-[122px]">ф</span><span>б</span>
      </div>
    </div>
  );
}

function WordWindow() {
  return (
    <div className={"absolute left-[823px] top-[8px] flex h-[1011px] w-[1056px] flex-col border border-[#5d6675] bg-[#e6e6e6] " + UI}>
      <div className="relative h-[81px] shrink-0 overflow-hidden bg-[#2b579a]">
        <svg viewBox="0 0 1053 81" className="absolute inset-0 h-full w-full" fill="#264b86" opacity=".55">
          <path d="M430 0h110q5 20-20 30-40 10-60 5-25 15-30 5zM560 0h120q20 35-10 50-50 12-100 0-25-20-10-50zM700 0h185q-5 40-30 42-30 5-60 25-60-25-110-10 20-20 15-57zM850 42q40 5 60-8-5 22-60 14zM985 38q10-20 25-8 20-10 35 0 10 20-10 30l-25 12q-30-12-25-34z" />
        </svg>
        <div className="relative flex h-[46px] items-center text-[#b6c6e0]">
          <Fit w={221} className="ml-[429px] text-[15.500px]">Пос Big_data_ 20,08,2022  -  Word</Fit>
          <svg viewBox="0 0 20 20" className="mb-[6px] ml-[65px] size-[20px]"><path d="M10 1 19 19H1z" fill="#ffe08a" stroke="#e58a1f" strokeWidth="1.600" /><path d="M10 6.500v6.500M10 15v2" stroke="#333" strokeWidth="2" /></svg>
          <Fit w={23} className="mb-[4px] ml-[11px] text-[12px] font-bold">... ...</Fit>
          <span className="mb-[7px] ml-[12px] flex size-[30px] items-center justify-center rounded-full bg-[#c9cacc]">
            <svg viewBox="0 0 20 20" className="size-[20px]" fill="none" stroke="#555" strokeWidth="1.400"><circle cx="10" cy="6.500" r="5" /><path d="M1.500 19q1-7.500 8.500-7.500t8.500 7.500" /></svg>
          </span>
          <svg viewBox="0 0 188 15" className="mb-[7px] ml-[33px] h-[15px] w-[188px]" fill="none" stroke="#a9bbd9" strokeWidth="1.200"><path d="M.6 1h16v13H.6zM.6 4h16M8.600 12V6.500M6 9l2.600-2.500L11.200 9M60 7h13M117 1.500h12v12h-12zM175 1.500l12 12M187 1.500l-12 12" /></svg>
        </div>
        <div className="relative flex h-[33px] items-center text-[15px] text-white">
          <span className="ml-[429px] w-[8px] leading-[20px]">т</span>
          <Sep className="ml-[5px] h-[29px]" />
          <Fit w={50} className="ml-[5px] leading-[20px]">Ссылки</Fit><Sep className="ml-[6px] h-[29px]" />
          <Fit w={64} className="ml-[5px] leading-[20px]">Рассылки</Fit><Sep className="ml-[6px] h-[29px]" />
          <Fit w={97} className="ml-[4px] leading-[20px]">Рецензирован</Fit><Sep className="ml-[4px] h-[29px]" />
          <Fit w={25} className="ml-[5px] leading-[20px]">Вид</Fit><Sep className="ml-[5px] h-[29px]" />
          <Fit w={58} className="ml-[5px] leading-[20px]">Справка</Fit><Sep className="ml-[5px] h-[29px]" />
          <svg viewBox="0 0 16 21" className="ml-[14px] h-[21px] w-[16px]" fill="none" stroke="#fff" strokeWidth="1.300"><path d="M5 15q0-3-2.500-5A6.500 6.500 0 1 1 13.500 10Q11 12 11 15zM5 18h6M6 20.400h4" /></svg>
          <Fit w={59} className="ml-[15px] mt-[-2px] leading-[20px]">Помощн</Fit>
          <svg viewBox="0 0 19 19" className="ml-[26px] size-[19px]" fill="none" stroke="#fff" strokeWidth="1.300"><circle cx="8" cy="6" r="5" /><path d="M.8 18q0-6 5-7.500M13 10v9M8.500 14.500h9" /></svg>
          <Fit w={82} className="ml-[3px] leading-[20px]">Поделиться</Fit>
        </div>
      </div>
      <Ribbon />
      <div className="mt-[5px] flex h-[16px] shrink-0 text-[12px] leading-[17px] text-[#444]">
        <div className="flex w-[974px] overflow-visible bg-white pl-[426px]">
          {rulerTicks.map((n) => (
            <span key={n} className="grid h-[16px] w-[47.250px] shrink-0 grid-cols-4">
              <span className="flex justify-center">{n}</span>
              <span className="text-center">·</span>
              <span className="mx-auto mt-[6px] h-[6px] w-px bg-[#555]" />
              <span className="text-center">·</span>
            </span>
          ))}
        </div>
        <div className="relative h-[16px] w-[73px] bg-[#c6c6c6] mix-blend-multiply">
          <svg viewBox="0 0 12 10" className="absolute left-[-4px] top-[9px] h-[10px] w-[12px]"><path d="M1 9.500V5l5-4.500L11 5v4.500z" fill="#fff" stroke="#777" /></svg>
        </div>
      </div>
      <div className="mt-[9px] flex h-[756px] shrink-0">
        <div className="ml-[5px] mr-[-15px] flex w-[17px] shrink-0 flex-col items-center justify-end bg-white pb-[3px] text-[#444]">
          <span className="h-[6px] w-px bg-[#555] rotate-90" />
          <span className="mt-[6px] size-[1.500px] bg-[#555]" />
          <span className="-rotate-90 text-[12px] leading-[18px]">15</span>
          <span className="size-[1.500px] bg-[#555]" />
          <span className="mt-[8px] h-[6px] w-px rotate-90 bg-[#555]" />
        </div>
        <span className="w-[16px]" />
        <DocumentPage />
      </div>
      <div className="flex flex-1 items-center border-t border-[#c6c6c6] bg-[#f2f2f2] text-[13.500px] text-[#444]">
        <Fit w={123} className="ml-[10px]">Страница 144 из 158</Fit>
        <Fit w={111} className="ml-[24px]">Число слов: 38694</Fit>
        <svg viewBox="0 0 18 16" className="ml-[24px] h-[15px] w-[18px]" fill="none" stroke="#666"><path d="M9 3v12M9 3Q7 1 .6 1v12Q7 13 9 15q2-2 3-2M9 3q2-2 8-2v2M11.500 5.500l5.500 6M17 5.500l-5.500 6" /></svg>
        <Fit w={58} className="ml-[22px]">казахский</Fit>
        <svg viewBox="0 0 18 16" className="ml-[290px] h-[15px] w-[18px]" fill="none" stroke="#666"><path d="M9 2v13M9 2Q7 .5.6.500v12.500Q7 13 9 15q2-2 8.500-2V.500Q11 .5 9 2M3 4h4M3 7h4M3 10h4M11 4h4M11 7h4M11 10h4" /></svg>
        <span className="ml-[16px] flex h-full w-[50px] items-center justify-center bg-[#c6c6c6]">
          <svg viewBox="0 0 17 16" className="h-[16px] w-[17px]" fill="none" stroke="#555"><path d="M.5.500h16v15H.5zM3 4h11M3 7h11M3 10h11M3 13h11" /></svg>
        </span>
        <svg viewBox="0 0 18 16" className="ml-[17px] h-[16px] w-[18px]" fill="none" stroke="#666"><path d="M7 13.500H.5V.500h12V7M3 4h7M3 7h6M3 10h4" /><circle cx="13" cy="11.500" r="4" fill="#777" /></svg>
        <svg viewBox="0 0 157 16" className="ml-[22px] h-[16px] w-[157px] shrink-0"><path d="M0 8h10M16 8.500h125M146 8h11M151.500 2.500v11" stroke="#444" strokeWidth="1.200" /><path d="M76 1h6v14h-6z" fill="#555" /></svg>
        <Fit w={35} className="ml-[16px]">100 %</Fit>
      </div>
    </div>
  );
}

function Wallpaper() {
  return (
    <>
      <div className="absolute left-[316px] top-0 h-[3px] w-[938px] bg-gradient-to-r from-[#1c0505] via-[#a82a20] to-[#d06050]" />
      <div className="absolute left-[1254px] top-0 h-[9px] w-[350px] bg-gradient-to-r from-[#e0786c] via-[#7a1c18] to-[#250507]" />
      <svg viewBox="0 0 508 94" className="absolute left-[316px] top-[936px] h-[94px] w-[508px]">
        <path d="M0 0h170l-55 45-17 49H0z" fill="#74211a" />
        <path d="M0 94V50l20-30 60 74z" fill="#4c1510" />
        <g stroke="#1d0806" strokeWidth="1.500" opacity=".8">
          <path d="m5 20 55 70M12 35l45 58M5 45l35 49M20 22l60 68M35 15l50 65M5 62l22 32M45 8l50 60M60 3l45 50M75 0l38 44M90 0l32 36M110 0l20 25M28 40l40 52M50 25l44 54M53 8l46 56M67 2l44 48M83 0l36 40M100 0l28 32M14 28l55 66M40 18l50 60" />
        </g>
        <path d="M172 0h160q10 15-15 22l-40 30-160 6q-10-6 0-12z" fill="#160606" />
        <path d="M172 0h95q-18 16-40 25l-110 25z" fill="#7f261d" />
        <path d="M117 50 230 12M120 52l125-28M140 52l150-20M150 44 320 4M200 55l110-10M240 12l95 2M230 25l95 5M250 18l75 4M215 40l90-6" stroke="#4d1712" strokeWidth="1.300" />
        <path d="M130 42 200 10M150 34 240 4M140 45l95-28" stroke="#2c0c09" strokeWidth="1.200" />
        <path d="M170 0q-70 60-80 94" stroke="#060202" strokeWidth="8" fill="none" />
        <path d="M178 0 112 54q220-8 214-6l40 46h-16L310 62Q200 60 110 66q-14 6-14 28H90q-2-28 14-46L166 0z" fill="#90291f" />
        <path d="M100 94V76q2-9 12-9l198-3 42 30z" fill="#040101" />
        <path d="M248 74q-12 12-8 20M295 74q4 10-2 20" stroke="#5a1713" strokeWidth="2" fill="none" />
      </svg>
      <svg viewBox="0 0 900 11" className="absolute left-[823px] top-[1019px] h-[11px] w-[900px]">
        <path d="M0 0h900v11H0z" fill="#050202" />
        <path d="M452 0h10l20 11h-28z" fill="#6d1b36" /><path d="M565 0h4l2 11h-3zM584 0h5l4 11h-6zM733 0h4l3 11h-7zM4 0h4l-2 11z" fill="#7b2820" />
      </svg>
    </>
  );
}

function Shortcut({ className }: { className: string }) {
  return (
    <span className={"absolute left-[17px] flex h-[17px] w-[16px] items-center bg-[#ececec] " + className}>
      <svg viewBox="0 0 10 12" className="ml-[2px] h-[13px] w-[10px]"><path d="M2 11Q0 4 6 3V0l4 5-4 4V6Q3 6 2 11z" fill="#1b62a8" /></svg>
    </span>
  );
}

function DesktopIcons() {
  return (
    <div className={"text-[14px] leading-[20px] text-white " + UI}>
      <span className="absolute left-[17px] top-[70px]">К</span>
      <span className="absolute left-[19px] top-[140px] size-[38px] rounded-full bg-[#2f9a4b]" />
      <Shortcut className="top-[173px]" />
      <span className="absolute left-[22px] top-[193px] text-[#4a8fd0]">с</span>
      <span className="absolute left-[21px] top-[213px]">с</span>
      <span className="absolute left-[17px] top-[260px] size-[46px] rounded-full bg-gradient-to-b from-[#35a0e0] to-[#1468b8]" />
      <Shortcut className="top-[296px]" />
      <span className="absolute left-[15px] top-[317px]">М</span>
      <Shortcut className="top-[419px]" />
      <span className="absolute left-[2px] top-[460px]">ком</span>
      <Shortcut className="top-[542px]" />
      <span className="absolute left-[16px] top-[562px]">Т</span>
      <Shortcut className="top-[665px]" />
      <span className="absolute left-[16px] top-[686px]">Т</span>
      <span className="absolute left-[11px] top-[706px]">пр</span>
      <span className="absolute left-[19px] top-[747px] h-[42px] w-[30px] rounded bg-[#5a86d2]" />
      <Shortcut className="top-[788px]" />
      <span className="absolute left-[12px] top-[808px]">Re</span>
      <span className="absolute left-[17px] top-[870px] h-[42px] w-[46px] rounded-l-xl bg-[#d24a28]" />
      <Shortcut className="top-[911px]" />
      <span className="absolute left-[23px] top-[932px]"><Fit w={48}>Corona</Fit></span>
      <span className="absolute left-[116px] top-[932px]"><Fit w={51}>ЭРА500</Fit></span>
      <span className="absolute left-[4px] top-[952px]"><Fit w={86}>Image Editor</Fit></span>
      <span className="absolute left-[1870px] top-[874px] h-[14px] w-[10px] bg-[#8e2840]" />
      <span className="absolute left-[1870px] top-[890px] h-[14px] w-[10px] bg-[#3b3a90]" />
      <span className="absolute left-[1870px] top-[905px] h-[14px] w-[10px] bg-[#1c7038]" />
      <span className="absolute left-[1873px] top-[932px]">ıка</span>
    </div>
  );
}

function TaskButton({ active = false, children }: { active?: boolean; children: React.ReactNode }) {
  return (
    <div className={"flex h-[50px] w-[61px] flex-col items-center " + (active ? "bg-[#f4eeee]" : "")}>
      <div className="flex flex-1 items-center pt-[2px]">{children}</div>
      <span className={"h-[3px] bg-[#0a78d4] " + (active ? "w-[61px]" : "w-[51px]")} />
    </div>
  );
}

function Taskbar() {
  return (
    <div className={"absolute inset-x-0 top-[1030px] flex h-[50px] items-center bg-[linear-gradient(90deg,#d5d5d5_0,#d5d5d5_270px,#dfcdcd_330px,#dfcecd_400px,#d5d5d5_480px,#d5d4d4_1180px,#e3cbd2_1260px,#dccfd1_1330px,#d8d6d4_1430px,#d7d7d7_100%)] text-black " + UI}>
      <svg viewBox="0 0 20 20" className="ml-[20px] size-[20px]"><path d="M0 3l8-1.200V9.500H0zM9 1.600 20 0v9.500H9zM0 10.500h8v7.700L0 17zM9 10.500h11V20L9 18.400z" /></svg>
      <svg viewBox="0 0 21 21" className="ml-[39px] size-[21px]" fill="none" stroke="#000" strokeWidth="1.500"><circle cx="13" cy="7.500" r="6.500" /><path d="M8.500 12.500.7 20.500" /></svg>
      <div className="ml-[24px] flex gap-px">
        <TaskButton>
          <svg viewBox="0 0 28 24" className="mr-[1px] h-[24px] w-[28px]"><path d="M0 1h11l2 3v3H0z" fill="#e0a020" /><path d="M0 5h12l2-2h13v20H0z" fill="#ffd765" /><path d="M5 23v-9q0-2 2-2h13q2 0 2 2v9h-5v-5h-7v5z" fill="#3a95dc" /></svg>
        </TaskButton>
        <TaskButton>
          <svg viewBox="0 0 28 28" className="mr-[2px] size-[28px]"><circle cx="14" cy="14" r="13.500" fill="#fbc116" /><path d="M14 .5A13.500 13.500 0 0 0 2.300 7.200L8 17l6-9h11.800A13.500 13.500 0 0 0 14 .5z" fill="#dd3c2d" /><path d="M2.300 7.200A13.500 13.500 0 0 0 12.500 27.400L19 17l-11 0z" fill="#1d9c50" /><circle cx="14" cy="14" r="6.600" fill="#fff" /><circle cx="14" cy="14" r="5.200" fill="#3478ea" /></svg>
        </TaskButton>
        <TaskButton>
          <svg viewBox="0 0 30 28" className="mr-[3px] h-[28px] w-[30px]"><path d="M8 0h21q1 0 1 1v6H7V1q0-1 1-1z" fill="#41a5ee" /><path d="M7 7h23v7H7z" fill="#2b7cd3" /><path d="M7 14h23v7H7z" fill="#185abd" /><path d="M7 21h23v6q0 1-1 1H8q-1 0-1-1z" fill="#103f91" /><rect y="6" width="16" height="16" rx="1.500" fill="#185abd" /><text x="2.500" y="18" fontSize="11" fontWeight="bold" fill="#fff" fontFamily="Noto Sans">W</text></svg>
        </TaskButton>
        <TaskButton active><GreenLogo className="mr-[1px] h-[29px] w-[29px]" /></TaskButton>
        <TaskButton>
          <svg viewBox="0 0 30 30" className="mr-[1px] size-[29px]"><path d="M2 18Q1 8 12 5q12-2 14 8 0 6-6 6-3 1-2 4 1 5-5 5Q3 27 2 18z" fill="#bfe0f2" stroke="#6da5c8" /><circle cx="7" cy="17" r="2.500" fill="#e23c32" /><circle cx="10" cy="10.500" r="2.500" fill="#44ad3c" /><circle cx="17" cy="8.500" r="2.500" fill="#f0b323" /><circle cx="13" cy="20" r="2.200" fill="#d9e4ec" stroke="#8aa" strokeWidth=".5" /><path d="m17 29 7-22" stroke="#e88b2a" strokeWidth="2.600" /><path d="m23 8-2-5q3-4 8-2-1 5-4 7z" fill="#b9854a" /></svg>
        </TaskButton>
      </div>
      <svg viewBox="0 0 28 27" className="ml-[965px] h-[26px] w-[27px]"><path d="M6 17q-6-1-5-6 1-4 5-4Q8 0 14 1q6 0 7 7 6 0 6 5t-6 4z" fill="#bcd5f2" /><path d="M6 17q-6-1-5-6 1-4 6-4 3-5 8 0 3 5 0 10z" fill="#dbe8f8" /><path d="M18 13q6 7 3 12-3 3-6 0-2-5 3-12z" fill="#1c8bd8" /></svg>
      <Fit w={37} className="ml-[12px] mt-[3px] text-[17px]">11°C</Fit>
      <Fit w={74} className="ml-[11px] mt-[3px] text-[17px]">Light rain</Fit>
      <Chev dir="up" className="ml-[20px] size-[18px] [--sw:0.9]" />
      <svg viewBox="0 0 16 18" className="ml-[14px] h-[18px] w-[16px]" fill="none" stroke="#000" strokeWidth="1.200"><rect x="1" y="4" width="9" height="10" rx="1.500" /><path d="m10 8 4-2v6L10 10M3 2q3-2 6 0M3 16q3 2 6 0" /></svg>
      <svg viewBox="0 0 22 20" className="ml-[11px] h-[19px] w-[21px]"><path d="M4 15q-4-1-3-5 1-3 4-3 2-6 8-5 4 1 5 5 3 1 3 4t-3 4z" fill="#3a3a3a" /><path d="M4 14q-3-1-2-4 3-4 9 0l5 4z" fill="#8c8c8c" /><circle cx="15.500" cy="14" r="5.500" fill="#e02b35" /><path d="m13.300 11.800 4.400 4.400M17.700 11.800l-4.400 4.400" stroke="#fff" strokeWidth="1.500" /></svg>
      <svg viewBox="0 0 22 15" className="ml-[9px] h-[14px] w-[20px]"><path d="M7 4.500h11v7.500H6V8z" /><path d="M6 2.500h14v11H4.500v-4M20 6h1.500v4H20" fill="none" stroke="#000" strokeWidth="1.100" /><path d="M0 3h5v2.500q-.5 2-2.500 2T0 5.500zM1 0v3M4 0v3M2.500 7v4" stroke="#000" strokeWidth=".9" /></svg>
      <svg viewBox="0 0 21 16" className="ml-[9px] h-[16px] w-[21px]" fill="none" stroke="#000" strokeWidth="1.200"><path d="M1 5.500h3L9 1.500v13L4 10.500H1z" /><path d="M12 5.500q2 2.500 0 5" /><path d="M14.500 3.500q4 4.500 0 9M17 1.500q6 6.500 0 13" stroke="#888" /></svg>
      <Fit w={27} className="ml-[14px] text-[15px]">ҚАЗ</Fit>
      <div className="ml-[17px] flex w-[70px] flex-col items-center text-[14px] leading-[22px]">
        <Fit w={35}>22:39</Fit>
        <Fit w={70}>19.08.2022</Fit>
      </div>
      <svg viewBox="0 0 30 32" className="ml-[22px] mt-[6px] h-[32px] w-[31px]"><path d="M0 1h20v15h-9v5l-5-5H0z" /><path d="M4 5h12M4 8.500h12M4 12h8" stroke="#d7d7d7" strokeWidth="1.300" /><circle cx="19.500" cy="20.500" r="9.800" fill="#d7d7d7" stroke="#555" /><text x="19.500" y="25.500" textAnchor="middle" fontSize="13" fontFamily="Noto Sans" stroke="#000" strokeWidth=".4">4</text></svg>
      <span className="ml-[14px] h-full w-px bg-[#9a9a9a]" />
    </div>
  );
}

export default function App() {
  return (
    <div className="relative h-[1080px] w-[1920px] overflow-hidden bg-black">
      <Wallpaper />
      <DesktopIcons />
      <WordWindow />
      <ClientWindow />
      <Taskbar />
    </div>
  );
}
